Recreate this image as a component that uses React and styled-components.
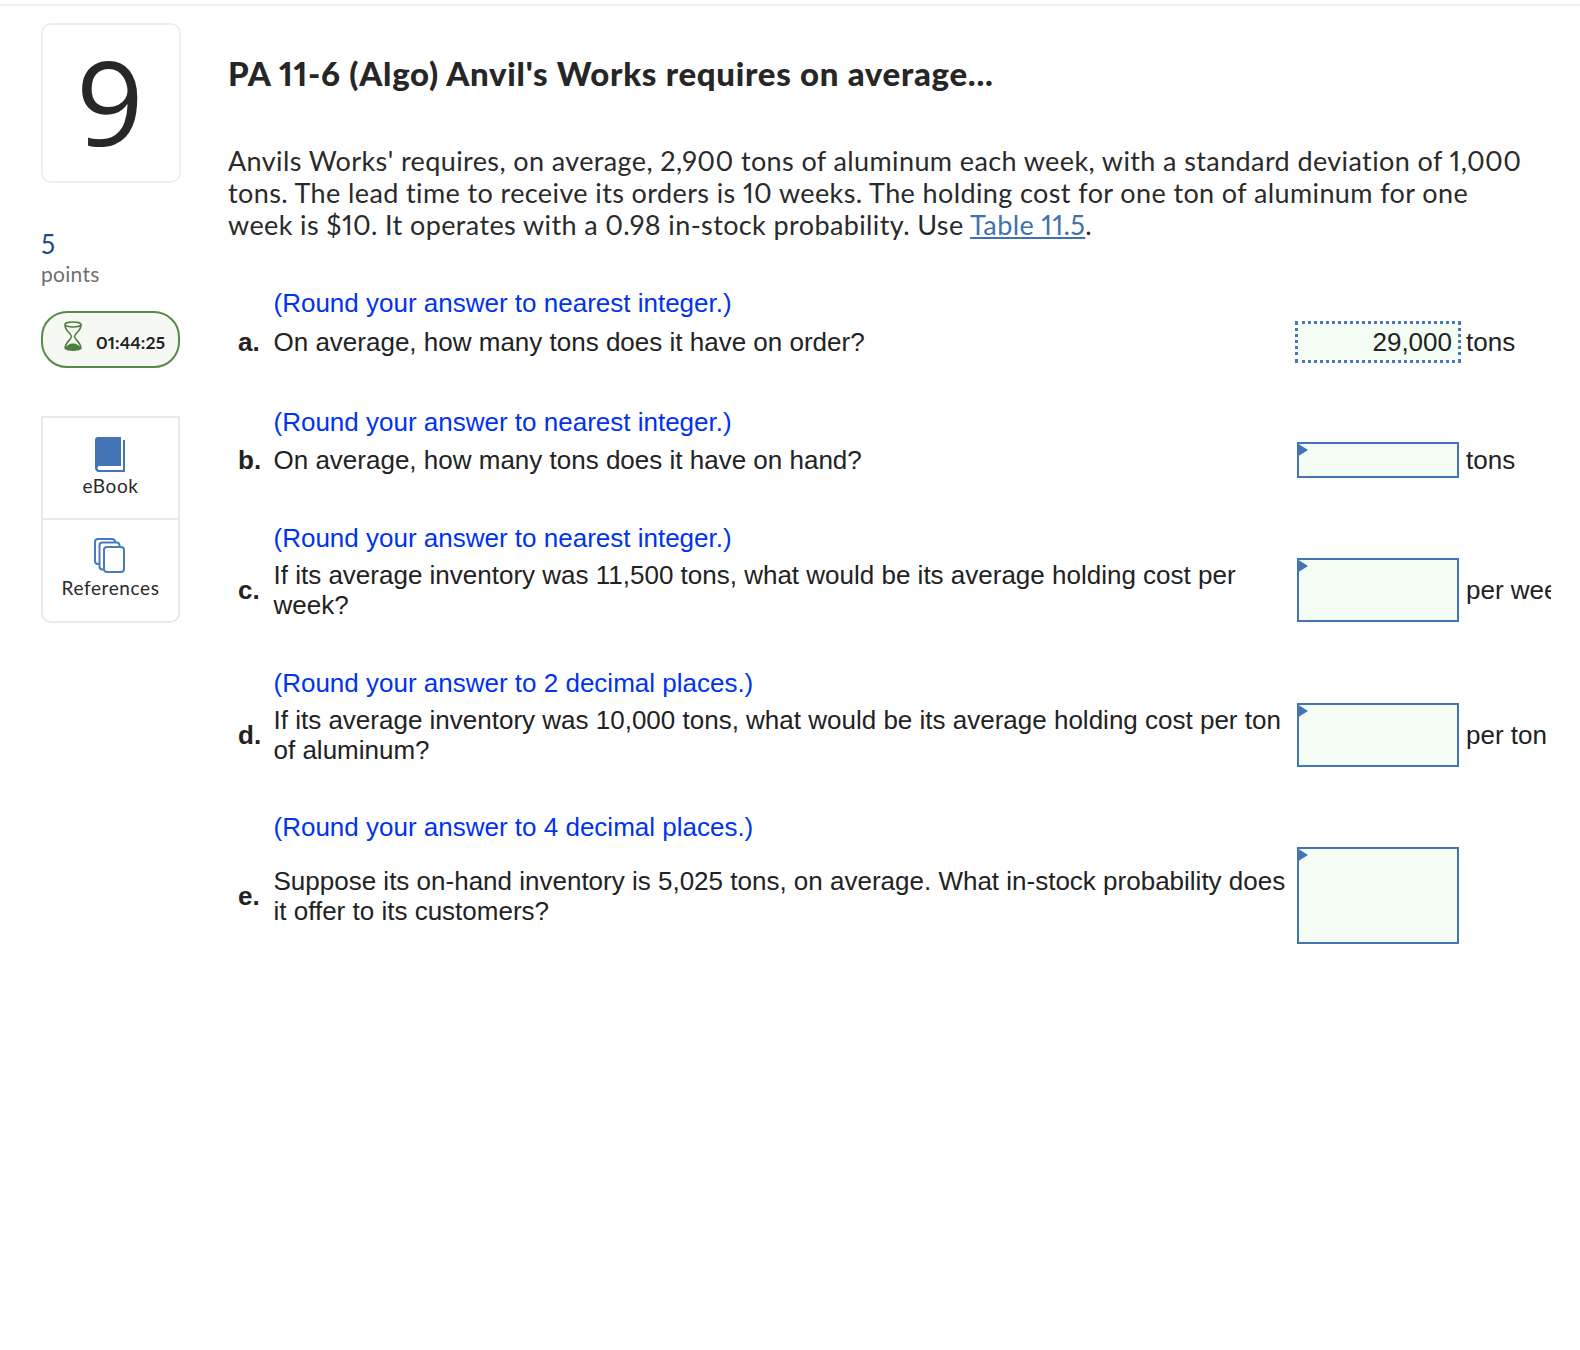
import React from "react";
import styled, { createGlobalStyle } from "styled-components";

const questions = [
  { id: "a", hint: "(Round your answer to nearest integer.)", text: "On average, how many tons does it have on order?", value: "29,000", unit: "tons", height: 38 },
  { id: "b", hint: "(Round your answer to nearest integer.)", text: "On average, how many tons does it have on hand?", unit: "tons", height: 36 },
  { id: "c", hint: "(Round your answer to nearest integer.)", text: "If its average inventory was 11,500 tons, what would be its average holding cost per week?", unit: "per week", height: 64 },
  { id: "d", hint: "(Round your answer to 2 decimal places.)", text: "If its average inventory was 10,000 tons, what would be its average holding cost per ton of aluminum?", unit: "per ton", height: 64 },
  { id: "e", hint: "(Round your answer to 4 decimal places.)", text: "Suppose its on-hand inventory is 5,025 tons, on average. What in-stock probability does it offer to its customers?", height: 97 },
];

export default function App() {
  return (
    <>
      <GlobalStyle />
      <TopRule />
      <Page>
        <Sidebar>
          <NumberCard>
            <NumberGlyph>9</NumberGlyph>
          </NumberCard>
          <Points>5</Points>
          <PointsLabel>points</PointsLabel>
          <Timer>
            <svg width="20" height="31" viewBox="0 0 20 31" fill="none">
              <ellipse cx="10" cy="3.5" rx="8" ry="2.500" stroke="#4f7f3f" strokeWidth="1.600" />
              <path d="M2 4c0 6 6 8 6.500 11.500C8 19 2 21.500 2 27.500M18 4c0 6-6 8-6.500 11.500.5 3.500 6.500 6 6.500 12" stroke="#4f7f3f" strokeWidth="1.600" />
              <path d="M1.500 28c1.500-3.500 5.500-5.500 8.500-5.500s7 2 8.500 5.500c-3 2.500-14 2.500-17 0z" fill="#4f7f3f" />
            </svg>
            <TimerText>01:44:25</TimerText>
          </Timer>
          <ToolBox>
            <Tool>
              <svg width="32" height="36" viewBox="0 0 32 36">
                <path d="M4 1h23v28H6.500C4 29 3 30.500 3 31.500H1V4c0-1.700 1.300-3 3-3z" fill="#4374b5" />
                <path d="M29 4h2v32H5c-2.500 0-4-1.700-4-4s1.500-4 4-4h22v2H5.500c-1.200 0-2 .8-2 2s.8 2 2 2H29z" fill="#4374b5" />
              </svg>
              <ToolLabel>eBook</ToolLabel>
            </Tool>
            <Tool>
              <svg width="32" height="36" viewBox="0 0 32 36" fill="#fff" stroke="#4a7cbd" strokeWidth="2">
                <rect x="1" y="1" width="20" height="25" rx="3" />
                <rect x="5.500" y="4.500" width="20" height="27" rx="3" />
                <rect x="10" y="9" width="20" height="25" rx="3" />
              </svg>
              <ToolLabel>References</ToolLabel>
            </Tool>
          </ToolBox>
        </Sidebar>
        <Main>
          <Title>PA 11-6 (Algo) Anvil's Works requires on average...</Title>
          <Intro>
            Anvils Works' requires, on average, 2,900 tons of aluminum each week, with a standard deviation of 1,000
            tons. The lead time to receive its orders is 10 weeks. The holding cost for one ton of aluminum for one
            week is $10. It operates with a 0.98 in-stock probability. Use <TableLink href="#">Table 11.5</TableLink>.
          </Intro>
          <QuestionList>
            {questions.map((q) => (
              <Question key={q.id}>
                <Hint>{q.hint}</Hint>
                <QuestionRow>
                  <Letter>{q.id}.</Letter>
                  <QuestionText>{q.text}</QuestionText>
                  <Answer $height={q.height} $focused={!!q.value}>
                    {q.value}
                  </Answer>
                  <Unit>{q.unit}</Unit>
                </QuestionRow>
              </Question>
            ))}
          </QuestionList>
        </Main>
      </Page>
    </>
  );
}

const GlobalStyle = createGlobalStyle`
  body {
    margin: 0;
    background: #fff;
    color: #222;
    font-family: "Lato", "Liberation Sans", sans-serif;
    font-variant-ligatures: none;
    font-variant-numeric: proportional-nums;
  }
`;

const TopRule = styled.div`
  height: 2px;
  margin-top: 4px;
  background: #f1f1f1;
`;

const Page = styled.div`
  display: flex;
  padding: 17px 0 0 41px;
  min-height: 1327px;
  box-sizing: border-box;
`;

const Sidebar = styled.aside`
  width: 140px;
  flex: none;
  display: flex;
  flex-direction: column;
`;

const NumberCard = styled.div`
  width: 140px;
  height: 160px;
  box-sizing: border-box;
  border: 2px solid #eee;
  border-radius: 10px;
  display: flex;
  justify-content: center;
  padding-top: 17px;
  font-family: "Open Sans", "Liberation Sans", sans-serif;
  font-size: 118px;
  line-height: 1;
  color: #272727;
`;

const NumberGlyph = styled.span`
  margin-left: -2px;
`;

const Points = styled.div`
  margin-top: 46px;
  font-size: 26px;
  line-height: 30px;
  color: #1f4a8c;
`;

const PointsLabel = styled.div`
  font-size: 21px;
  letter-spacing: 0.3px;
  line-height: 30px;
  color: #6f6f6f;
`;

const Timer = styled.div`
  margin-top: 22px;
  width: 139px;
  height: 57px;
  box-sizing: border-box;
  border: 2px solid #5a8a4a;
  border-radius: 26px;
  background: #f6f8f4;
  display: flex;
  align-items: flex-start;
  padding: 8px 0 0 20px;
  gap: 13px;
`;

const TimerText = styled.span`
  margin-top: 12px;
  font-size: 17.500px;
  letter-spacing: 0.1px;
  line-height: 20px;
  font-weight: 700;
  color: #222;
`;

const ToolBox = styled.div`
  margin: 48px 0 0;
  width: 139px;
  box-sizing: border-box;
  border: 2px solid #e9e9e9;
  border-radius: 0 0 10px 10px;
`;

const Tool = styled.div`
  height: 100px;
  padding-top: 18px;
  box-sizing: border-box;
  display: flex;
  flex-direction: column;
  align-items: center;
  gap: 2px;
  & + & {
    border-top: 2px solid #e9e9e9;
    height: 103px;
  }
  & svg {
    margin-right: 1px;
  }
`;

const ToolLabel = styled.span`
  font-size: 19px;
  letter-spacing: 0.6px;
  line-height: 24px;
  color: #2a2a2a;
`;

const Main = styled.main`
  margin-left: 47px;
  flex: 1;
  min-width: 0;
`;

const Title = styled.h1`
  margin: 28px 0 0;
  font-size: 33px;
  letter-spacing: 0.7px;
  line-height: 44px;
  font-weight: 900;
  color: #262626;
`;

const Intro = styled.p`
  margin: 50px 0 0;
  width: 1310px;
  font-size: 27px;
  letter-spacing: 0.39px;
  line-height: 32px;
  color: #2a2a2a;
`;

const TableLink = styled.a`
  color: #3f72af;
  text-decoration: underline;
`;

const QuestionList = styled.div`
  margin-top: 47px;
  display: flex;
  flex-direction: column;
  gap: 45.500px;
  font-family: "Liberation Sans", Arial, sans-serif;
  font-size: 26px;
  line-height: 30px;
`;

const Question = styled.section`
  display: flex;
  flex-direction: column;
  gap: 5px;
`;

const Hint = styled.div`
  margin-left: 45.500px;
  color: #0033ee;
`;

const QuestionRow = styled.div`
  display: flex;
  align-items: center;
`;

const Letter = styled.b`
  width: 45.500px;
  flex: none;
  padding-left: 10px;
  box-sizing: border-box;
`;

const QuestionText = styled.div`
  width: 1023.500px;
  flex: none;
`;

const Answer = styled.div`
  position: relative;
  flex: none;
  width: 162px;
  height: ${(p) => p.$height}px;
  box-sizing: border-box;
  background: #f3fdf3;
  text-align: right;
  padding-right: 7px;
  line-height: ${(p) => p.$height}px;
  color: #222;
  border: ${(p) => (p.$focused ? "none" : "2px solid #4374b5")};
  outline: ${(p) => (p.$focused ? "3px dotted #4a78bb" : "none")};
  outline-offset: -1px;
  ${(p) =>
    !p.$focused &&
    `&::before {
      content: "";
      position: absolute;
      left: -2px;
      top: -1px;
      border-left: 11px solid #4374b5;
      border-top: 7px solid transparent;
      border-bottom: 7px solid transparent;
    }`}
`;

const Unit = styled.div`
  margin-left: 7px;
  width: 85px;
  flex: none;
  overflow: hidden;
  white-space: nowrap;
`;
